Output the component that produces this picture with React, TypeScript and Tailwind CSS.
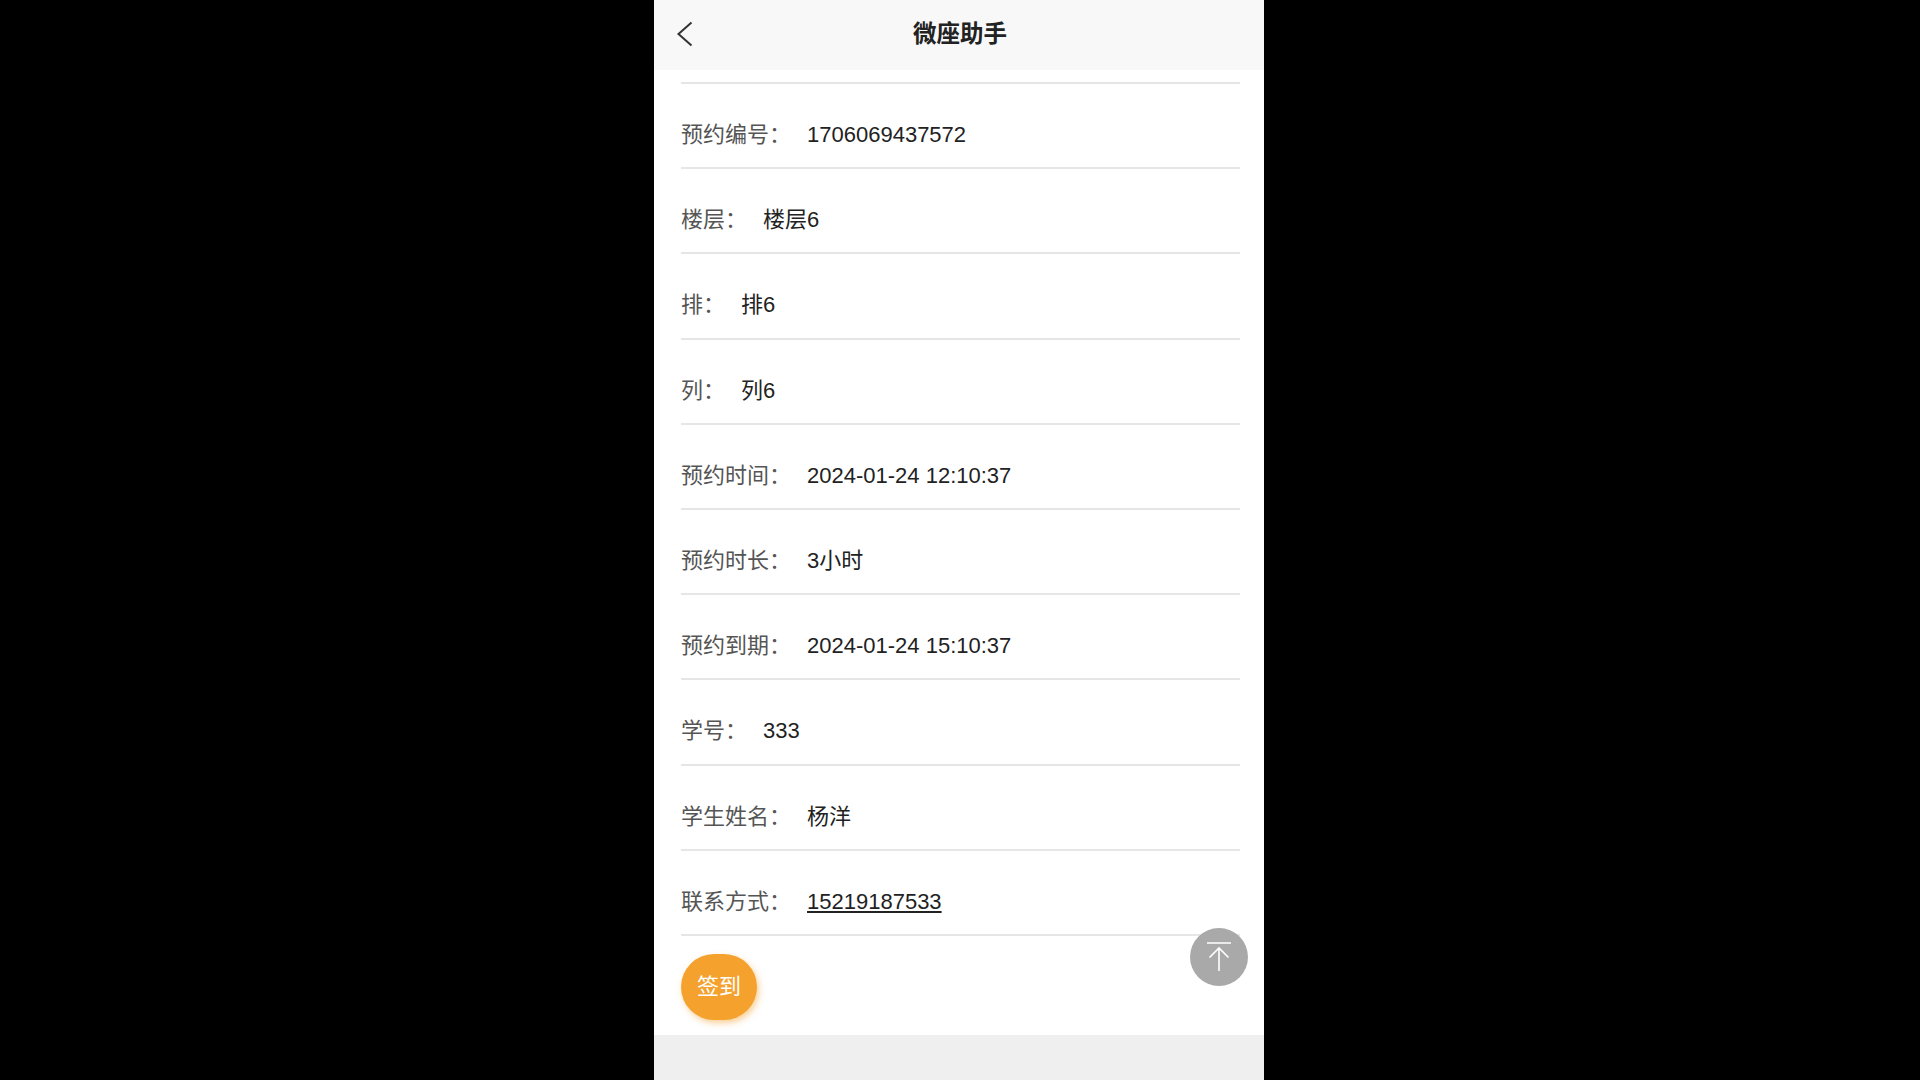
const rows = [
  { label: "预约编号：", value: "1706069437572" },
  { label: "楼层：", value: "楼层6" },
  { label: "排：", value: "排6" },
  { label: "列：", value: "列6" },
  { label: "预约时间：", value: "2024-01-24 12:10:37" },
  { label: "预约时长：", value: "3小时" },
  { label: "预约到期：", value: "2024-01-24 15:10:37" },
  { label: "学号：", value: "333" },
  { label: "学生姓名：", value: "杨洋" },
  { label: "联系方式：", value: "15219187533", link: true },
];

export default function App() {
  return (
    <div className="h-screen overflow-hidden bg-black flex justify-center pr-[2px] font-['Liberation_Sans','Noto_Sans_CJK_SC',sans-serif]">
      <div className="relative w-[610px] h-full flex flex-col bg-white">
        <header className="relative h-[70px] shrink-0 bg-[#f8f8f8] flex items-center justify-center pl-[2px]">
          <svg className="absolute left-[22px] top-[21px]" width="18" height="26" viewBox="0 0 18 26" fill="none">
            <path d="M15.5 1.5 2.5 13l13 11.5" stroke="#333" strokeWidth="2" />
          </svg>
          <h1 className="text-[23.5px] font-bold text-[#222]">微座助手</h1>
        </header>

        <div className="flex-1 flex flex-col pl-[27px] pr-[24px]">
          <div className="h-[14px] shrink-0 border-b-2 border-[#e6e6e6]" />
          {rows.map((row) => (
            <div key={row.label} className="h-[85.2px] shrink-0 flex items-center pt-[18px] border-b-2 border-[#e6e6e6] text-[22px]">
              <span className="text-[#555] mr-4">{row.label}</span>
              <span className={row.link ? "text-[#222] underline" : "text-[#222]"}>{row.value}</span>
            </div>
          ))}
          <button className="mt-[18px] w-[76px] h-[66px] rounded-full bg-[#f4a12e] text-white text-[22px] shadow-[2px_3px_6px_rgba(244,161,46,0.5)]">
            签到
          </button>
        </div>

        <div className="h-[45px] shrink-0 bg-[#efefef]" />

        <div className="absolute left-[536px] top-[928px] w-[58px] h-[58px] rounded-full bg-[#a9a9a9] flex items-center justify-center">
          <svg width="26" height="32" viewBox="0 0 26 32" fill="none" stroke="#fff" strokeWidth="1.6">
            <path d="M1 2h24M13 30V7M3.5 16.5 13 7l9.5 9.5" />
          </svg>
        </div>
      </div>
    </div>
  );
}
